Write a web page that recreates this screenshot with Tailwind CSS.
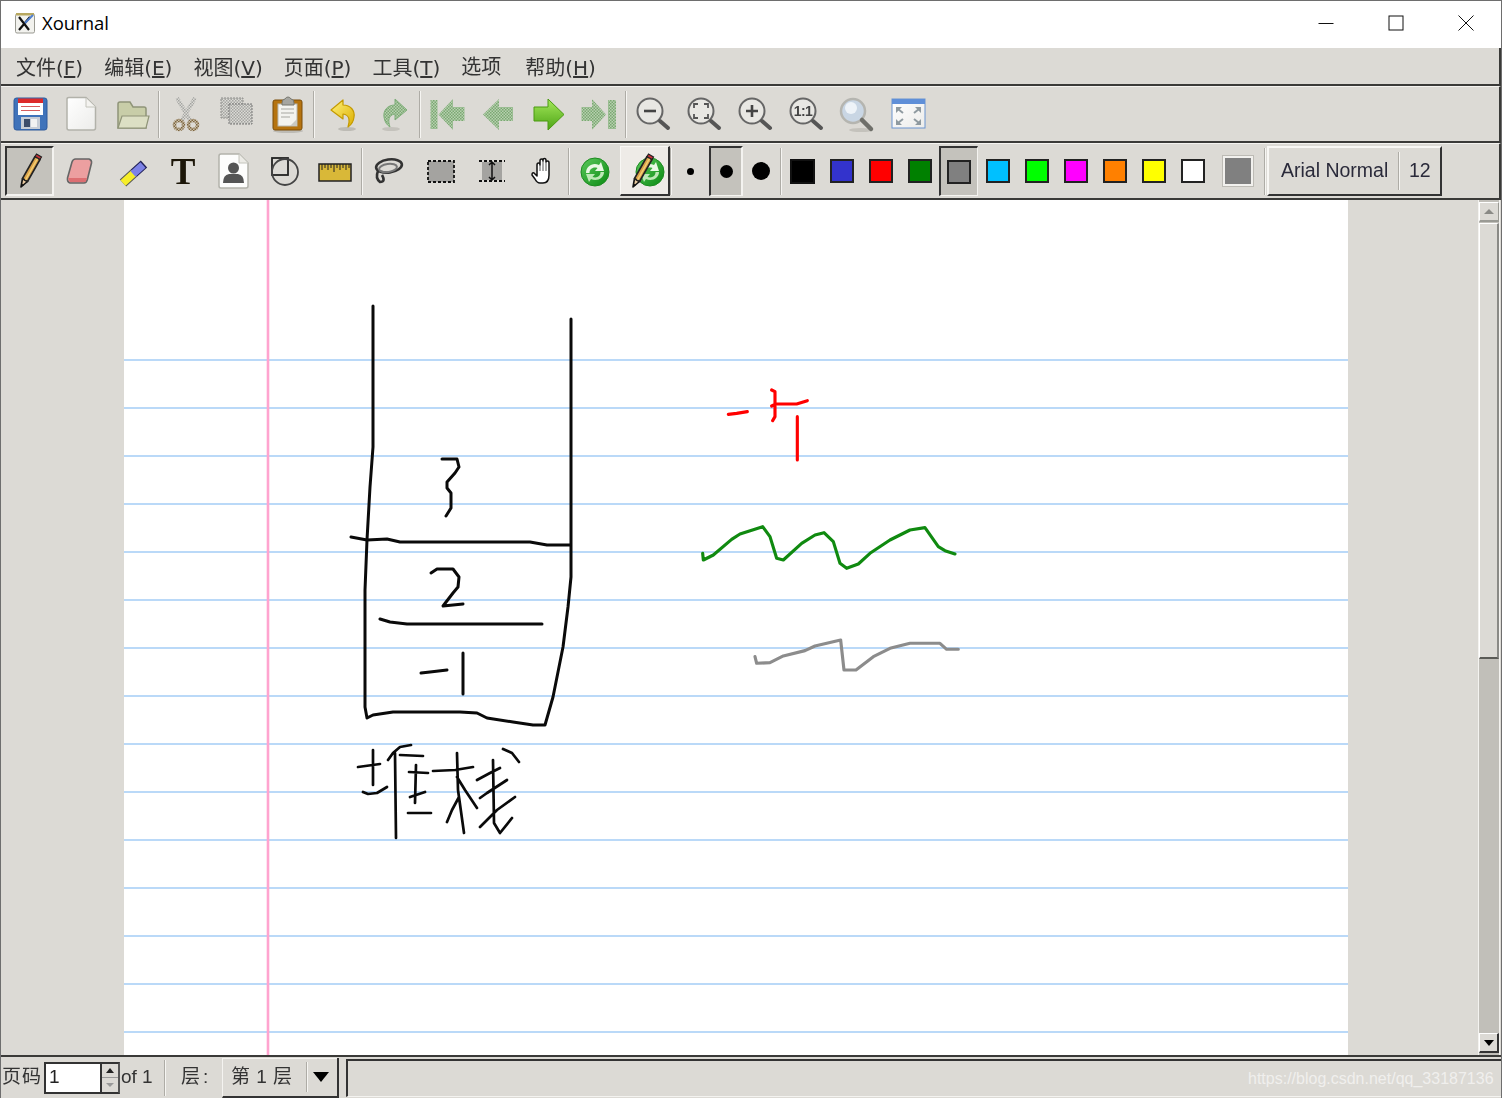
<!doctype html>
<html>
<head>
<meta charset="utf-8">
<title>Xournal</title>
<script src="https://cdn.jsdelivr.net/npm/@tailwindcss/browser@4"></script>
</head>
<body class="bg-white">
<svg class="absolute w-0 h-0">
<defs>
<pattern id="sg" width="3" height="3" patternUnits="userSpaceOnUse"><rect width="3" height="3" fill="#b8d0b0"/><rect width="1.5" height="1.5" fill="#7aa872"/><rect x="1.5" y="1.5" width="1.5" height="1.5" fill="#7aa872"/></pattern>
<pattern id="sk" width="3" height="3" patternUnits="userSpaceOnUse"><rect width="3" height="3" fill="#dcdbd6"/><rect width="1.5" height="1.5" fill="#a5a5a2"/><rect x="1.5" y="1.5" width="1.5" height="1.5" fill="#a5a5a2"/></pattern>
<pattern id="sb" width="3" height="3" patternUnits="userSpaceOnUse"><rect width="3" height="3" fill="#c9c0ab"/><rect width="1.5" height="1.5" fill="#7d6440"/><rect x="1.5" y="1.5" width="1.5" height="1.5" fill="#7d6440"/></pattern>
<linearGradient id="gg" x1="0" y1="0" x2="0" y2="1"><stop offset="0" stop-color="#a4e85a"/><stop offset="1" stop-color="#4da416"/></linearGradient>
<linearGradient id="gy" x1="0" y1="0" x2="1" y2="1"><stop offset="0" stop-color="#fff27a"/><stop offset="1" stop-color="#dcae00"/></linearGradient>
<linearGradient id="gw" x1="0" y1="0" x2="1" y2="1"><stop offset="0" stop-color="#ffffff"/><stop offset="1" stop-color="#ececea"/></linearGradient>
<linearGradient id="gr" x1="0" y1="0" x2="1" y2="1"><stop offset="0" stop-color="#5cc95c"/><stop offset="1" stop-color="#0a8a12"/></linearGradient>
<g id="pencil"><polygon points="11,36 12.5,27.5 17.5,30.5" fill="#e8c9a0" stroke="#111" stroke-width="1.6" stroke-linejoin="round"/><polygon points="12.5,27.5 25,5.5 30,8.5 17.5,30.5" fill="#dba24a" stroke="#222" stroke-width="1.6" stroke-linejoin="round"/><polygon points="15,28.5 27,7 28.2,7.7 16.2,29.2" fill="#f2cf73"/><polygon points="25,5.5 26.5,3 31.5,6 30,8.5" fill="#c8323a" stroke="#222" stroke-width="1.2"/><polygon points="11,36 11.4,32.5 14,34" fill="#111"/></g>
<g id="refresh"><circle cx="20" cy="21" r="14" fill="url(#gr)" stroke="#1c8a20" stroke-width="1"/><path d="M11 22 C11 15 18 11 24 14 L26 11 L29 20 L20 20 L22.5 17 C18 15.5 14.5 18 14.5 22 Z" fill="#e9f8e4"/><path d="M29 21 C29 27 22 31 16 28 L14 31 L11 23 L20 23 L17.5 26 C22 27.5 25.5 25 25.5 21 Z" fill="#bde8b6"/></g>
</defs>
</svg>

<div class="relative w-[1502px] h-[1098px] overflow-hidden flex flex-col border-t border-l border-r border-[#6e6e6e] bg-[#dcdad5] text-[#222] [font-family:'Liberation_Sans','Noto_Sans_CJK_SC',sans-serif]">

  <!-- Title bar -->
  <div class="h-[47px] shrink-0 bg-white flex items-center pb-[3px]">
    <svg class="ml-[13px] w-[22px] h-[22px]" viewBox="0 0 22 22"><rect x="1.5" y="2" width="19" height="19" rx="1.5" fill="#f2f2ee" stroke="#9a9a92"/><rect x="2" y="1" width="18" height="2.5" fill="#b8a860"/><path d="M5 5 L15 18 M16 5 L5 18" stroke="#111" stroke-width="2.2"/><path d="M19 3 L11 11" stroke="#4f7fd0" stroke-width="2"/></svg>
    <span class="ml-[6px] text-[18.5px] text-black [font-family:'Open_Sans',sans-serif]">Xournal</span>
    <div class="ml-auto flex items-center">
      <svg class="w-[16px] h-[16px] mr-[54px]" viewBox="0 0 16 16"><path d="M0.5 8.5 H15.5" stroke="#111" stroke-width="1"/></svg>
      <svg class="w-[16px] h-[16px] mr-[54px]" viewBox="0 0 16 16"><rect x="1" y="1" width="14" height="14" fill="none" stroke="#111" stroke-width="1"/></svg>
      <svg class="w-[16px] h-[16px] mr-[27px]" viewBox="0 0 16 16"><path d="M0.5 0.5 L15.5 15.5 M15.5 0.5 L0.5 15.5" stroke="#111" stroke-width="1"/></svg>
    </div>
  </div>

  <!-- Menu bar -->
  <div class="h-[38px] shrink-0 flex items-center gap-[21px] pl-[15px] pt-[4px] border-b-2 border-r-2 border-b-[#3a3a38] border-r-[#3a3a38] text-[20px] text-[#333] whitespace-nowrap [font-family:'DejaVu_Sans','Noto_Sans_CJK_SC',sans-serif] blur-[0.35px]">
    <span>文件(<u>F</u>)</span>
    <span>编辑(<u>E</u>)</span>
    <span>视图(<u>V</u>)</span>
    <span>页面(<u>P</u>)</span>
    <span>工具(<u>T</u>)</span>
    <span class="mb-[3px]">选项</span>
    <span class="ml-[3px]">帮助(<u>H</u>)</span>
  </div>

  <!-- Toolbar 1 -->
  <div class="h-[57px] shrink-0 flex items-center pl-[4px] border-t border-t-[#f4f3f0] border-b-2 border-r-2 border-b-[#3a3a38] border-r-[#3a3a38] blur-[0.35px]">
    <div class="w-[51px] flex justify-center"><svg class="w-[40px] h-[40px]" viewBox="0 0 40 40"><rect x="3" y="4" width="33" height="32" rx="2.5" fill="#3f73ba" stroke="#2e5a9c"/><rect x="7" y="8" width="25" height="13" fill="#fff"/><rect x="7" y="4.5" width="25" height="4.5" fill="#dd2a2a"/><path d="M10 12.5 H29 M10 16.5 H29" stroke="#c33" stroke-width=".8"/><rect x="10" y="23" width="19" height="12" fill="#c7cdd6"/><rect x="13" y="25" width="6" height="8" fill="#3c4d6a"/><rect x="20" y="25" width="6" height="8" fill="#f2f2f2"/></svg></div>
    <div class="w-[51px] flex justify-center"><svg class="w-[40px] h-[40px]" viewBox="0 0 40 40"><path d="M5 5 Q5 3.5 7 3.5 H24 L33.5 13 V34 Q33.5 36 31.5 36 H7 Q5 36 5 34 Z" fill="url(#gw)" stroke="#b2b2aa" stroke-width="1.5"/><path d="M24 4 V13 H33.5" fill="#f4f3f0" stroke="#c4c4bc"/></svg></div>
    <div class="w-[51px] flex justify-center"><svg class="w-[40px] h-[40px]" viewBox="0 0 40 40"><path d="M5 34 V10 Q5 8 7 8 H17 L20 13 H31 Q33 13 33 15 V34 Z" fill="#c8cda8" stroke="#8f9478" stroke-width="1.5"/><path d="M5 34 L9 22 H36 L33 34 Z" fill="#dcdfc4" stroke="#8f9478" stroke-width="1.2"/></svg></div>
    <div class="w-[2px] h-[47px] shrink-0 border-l border-l-[#aeaca6] bg-[#f6f5f2]"></div>
    <div class="w-[51px] flex justify-center"><svg class="w-[40px] h-[40px]" viewBox="0 0 40 40"><path d="M11 4 L24 26 M29 4 L16 26" stroke="url(#sk)" stroke-width="4"/><circle cx="13" cy="31" r="4.5" fill="none" stroke="url(#sb)" stroke-width="3.5"/><circle cx="27" cy="31" r="4.5" fill="none" stroke="url(#sb)" stroke-width="3.5"/></svg></div>
    <div class="w-[51px] flex justify-center"><svg class="w-[40px] h-[40px]" viewBox="0 0 40 40"><rect x="4" y="4" width="22" height="20" fill="url(#sk)" stroke="#8d8d8a" stroke-dasharray="2 1"/><rect x="12" y="10" width="23" height="20" fill="url(#sk)" stroke="#777" stroke-dasharray="2 1"/></svg></div>
    <div class="w-[51px] flex justify-center"><svg class="w-[40px] h-[40px]" viewBox="0 0 40 40"><ellipse cx="20" cy="37" rx="15" ry="2" fill="#bdbbb5"/><rect x="5" y="6" width="29" height="30" rx="2" fill="#b5730f" stroke="#7a4d08"/><rect x="10" y="10" width="19" height="22" fill="#f3f3ef" stroke="#b8b8b0"/><path d="M13 15 H26 M13 19 H26 M13 23 H22" stroke="#a8a8a2" stroke-width="1.2"/><path d="M29 25 L29 32 L22 32 Z" fill="#c9c9c3"/><path d="M14 9 Q14 5 17 5 Q18 3 20 3 Q22 3 23 5 Q26 5 26 9 V11 H14 Z" fill="#a5a5a0" stroke="#77776f"/></svg></div>
    <div class="w-[2px] h-[47px] shrink-0 mr-[2px] border-l border-l-[#aeaca6] bg-[#f6f5f2]"></div>
    <div class="w-[51px] flex justify-center"><svg class="w-[40px] h-[40px]" viewBox="0 0 40 40"><ellipse cx="24" cy="35" rx="9" ry="2" fill="#bdbbb5"/><path d="M8 16 L20 6 V11 C28 11 32 17 31 23 C30.5 28 28 31 25 33 C27 27 27 21 20 20 V25 Z" fill="url(#gy)" stroke="#c49a00" stroke-width="1.2" stroke-linejoin="round"/></svg></div>
    <div class="w-[51px] flex justify-center"><svg class="w-[40px] h-[40px]" viewBox="0 0 40 40"><ellipse cx="17" cy="35" rx="9" ry="2" fill="#c4c2bc"/><path d="M33 16 L21 5 V11 C13 11 9 17 10 23 C10.5 28 13 31 16 33 C14 27 14 21 21 20 V26 Z" fill="url(#sg)" stroke="#7fae7a" stroke-width="1"/></svg></div>
    <div class="w-[2px] h-[47px] shrink-0 border-l border-l-[#aeaca6] bg-[#f6f5f2]"></div>
    <div class="w-[51px] flex justify-center"><svg class="w-[40px] h-[40px]" viewBox="0 0 40 40"><rect x="3.5" y="6" width="7" height="29" fill="url(#sg)"/><polygon points="11.5,20.5 26,5 26,13 37.5,13 37.5,27 26,27 26,36" fill="url(#sg)"/></svg></div>
    <div class="w-[51px] flex justify-center"><svg class="w-[40px] h-[40px]" viewBox="0 0 40 40"><polygon points="5,20.5 21,5 21,13 35,13 35,27 21,27 21,36" fill="url(#sg)"/></svg></div>
    <div class="w-[51px] flex justify-center"><svg class="w-[40px] h-[40px]" viewBox="0 0 40 40"><polygon points="35,20.5 19,5 19,13 5,13 5,27 19,27 19,36" fill="url(#gg)" stroke="#4a9a10" stroke-linejoin="round"/></svg></div>
    <div class="w-[51px] flex justify-center"><svg class="w-[40px] h-[40px]" viewBox="0 0 40 40"><polygon points="26,20.5 12,5 12,13 1.5,13 1.5,27 12,27 12,36" fill="url(#sg)"/><rect x="28" y="6" width="8" height="29" fill="url(#sg)"/></svg></div>
    <div class="w-[2px] h-[47px] shrink-0 border-l border-l-[#aeaca6] bg-[#f6f5f2]"></div>
    <div class="w-[51px] flex justify-center"><svg class="w-[40px] h-[40px]" viewBox="0 0 40 40"><circle cx="17" cy="17" r="12.5" fill="#e8e7e3" stroke="#666" stroke-width="2"/><path d="M27 27 L35 34" stroke="#555" stroke-width="4" stroke-linecap="round"/><path d="M11 17 H23" stroke="#444" stroke-width="2.6"/></svg></div>
    <div class="w-[51px] flex justify-center"><svg class="w-[40px] h-[40px]" viewBox="0 0 40 40"><circle cx="17" cy="17" r="12.5" fill="#e8e7e3" stroke="#666" stroke-width="2"/><path d="M27 27 L35 34" stroke="#555" stroke-width="4" stroke-linecap="round"/><path d="M10 14 V10 H14 M20 10 H24 V14 M24 20 V24 H20 M14 24 H10 V20" fill="none" stroke="#555" stroke-width="1.8"/></svg></div>
    <div class="w-[51px] flex justify-center"><svg class="w-[40px] h-[40px]" viewBox="0 0 40 40"><circle cx="17" cy="17" r="12.5" fill="#e8e7e3" stroke="#666" stroke-width="2"/><path d="M27 27 L35 34" stroke="#555" stroke-width="4" stroke-linecap="round"/><path d="M11 17 H23 M17 11 V23" stroke="#444" stroke-width="2.6"/></svg></div>
    <div class="w-[51px] flex justify-center"><svg class="w-[40px] h-[40px]" viewBox="0 0 40 40"><circle cx="17" cy="17" r="12.5" fill="#e8e7e3" stroke="#666" stroke-width="2"/><path d="M27 27 L35 34" stroke="#555" stroke-width="4" stroke-linecap="round"/><text x="17" y="22" text-anchor="middle" font-size="14" font-weight="700" letter-spacing="-.5" fill="#444" font-family="Liberation Sans">1:1</text></svg></div>
    <div class="w-[51px] flex justify-center"><svg class="w-[40px] h-[40px]" viewBox="0 0 40 40"><ellipse cx="24" cy="36" rx="12" ry="2" fill="#c4c2bc"/><circle cx="16" cy="17" r="12" fill="#c9d6e4" stroke="#b5b5b0" stroke-width="2.5"/><circle cx="14" cy="14" r="6" fill="#eef3f8"/><path d="M25 26 L34 35" stroke="#6f6f6a" stroke-width="4.5" stroke-linecap="round"/></svg></div>
    <div class="w-[51px] flex justify-center"><svg class="w-[40px] h-[40px]" viewBox="0 0 40 40"><rect x="4" y="5" width="33" height="29" fill="url(#gw)" stroke="#6a94d0" stroke-width="1"/><rect x="4" y="5" width="33" height="5" fill="#5f8fd8"/><path d="M8 13 H14 L8 19 Z M33 13 H27 L33 19 Z M8 31 H14 L8 25 Z M33 31 H27 L33 25 Z" fill="#8f9aa0"/><path d="M10 15 L15 19 M31 15 L26 19 M10 29 L15 25 M31 29 L26 25" stroke="#8f9aa0" stroke-width="2"/></svg></div>
  </div>

  <!-- Toolbar 2 -->
  <div class="h-[57px] shrink-0 flex items-center pl-[4px] border-t border-t-[#f4f3f0] border-b-2 border-r-2 border-b-[#3a3a38] border-r-[#3a3a38] blur-[0.35px]">
    <div class="w-[49px] h-[50px] flex justify-center items-center bg-[#c4c2bc] border-t-2 border-l-2 border-t-[#333] border-l-[#333] border-b-2 border-r-2 border-b-[#f4f3f0] border-r-[#f4f3f0]"><svg class="w-[40px] h-[40px] shrink-0" viewBox="0 0 40 40"><use href="#pencil"/></svg></div>
    <div class="w-[51px] flex justify-center"><svg class="w-[40px] h-[40px]" viewBox="0 0 40 40"><path d="M12 11 Q13 8 15.5 8 H29 Q32 9 31.5 12 L27.5 28 Q26.5 32 24 32 H10 Q7 31 7.5 27 Z" fill="#ec9fa0" stroke="#666" stroke-width="1.6" stroke-linejoin="round"/><path d="M8 27 H27 L25.5 31 H10 Z" fill="#dd6f72"/></svg></div>
    <div class="w-[51px] flex justify-center"><svg class="w-[40px] h-[40px]" viewBox="0 0 40 40"><path d="M12 32 L23 22" stroke="#555" stroke-width="9.5"/><path d="M12 32 L23 22" stroke="#f6ee2a" stroke-width="7.5"/><path d="M23 22 L33 13" stroke="#1f1f55" stroke-width="9.5"/><path d="M22 23 L32 14" stroke="#7d82e6" stroke-width="7.5"/></svg></div>
    <div class="w-[51px] flex justify-center items-center h-[40px] pl-[3px] text-[37px] font-bold leading-none text-[#1c1608] [font-family:'Liberation_Serif',serif]">T</div>
    <div class="w-[51px] flex justify-center"><svg class="w-[40px] h-[40px]" viewBox="0 0 40 40"><path d="M6 5 Q6 3 8 3 H26 L35 12 V35 Q35 37 33 37 H8 Q6 37 6 35 Z" fill="#fdfdfc" stroke="#b2b2aa" stroke-width="1.5"/><path d="M26 3 V12 H35" fill="#ecebe6" stroke="#c4c4bc"/><circle cx="20.5" cy="17" r="5.5" fill="#555"/><path d="M10 32 Q10 24 16 23 H25 Q31 24 31 32 Z" fill="#555"/></svg></div>
    <div class="w-[51px] flex justify-center"><svg class="w-[40px] h-[40px]" viewBox="0 0 40 40"><rect x="8" y="7" width="16" height="17" fill="none" stroke="#222" stroke-width="1.8"/><circle cx="21" cy="21" r="13" fill="none" stroke="#444" stroke-width="1.8"/></svg></div>
    <div class="w-[51px] flex justify-center"><svg class="w-[40px] h-[40px]" viewBox="0 0 40 40"><rect x="4" y="13" width="32" height="17" fill="#d9b838" stroke="#222" stroke-width="1.5"/><path d="M7 13 V19 M10 13 V17 M13 13 V19 M16 13 V17 M19 13 V21 M22 13 V17 M25 13 V19 M28 13 V17 M31 13 V19 M34 13 V17" stroke="#222" stroke-width="1"/></svg></div>
    <div class="w-[2px] h-[47px] shrink-0 ml-[1px] mr-[1px] border-l border-l-[#aeaca6] bg-[#f6f5f2]"></div>
    <div class="w-[51px] flex justify-center"><svg class="w-[40px] h-[40px]" viewBox="0 0 40 40"><ellipse cx="19" cy="15" rx="13" ry="6.5" transform="rotate(-8 19 15)" fill="none" stroke="#333" stroke-width="2.6"/><ellipse cx="18" cy="17" rx="9" ry="4" transform="rotate(-8 18 17)" fill="none" stroke="#777" stroke-width="2"/><path d="M8 20 Q5 27 10 31 Q16 31 12 24" fill="none" stroke="#333" stroke-width="2.6"/></svg></div>
    <div class="w-[51px] flex justify-center"><svg class="w-[40px] h-[40px]" viewBox="0 0 40 40"><rect x="7" y="10" width="26" height="21" fill="#a4a3a0" stroke="#111" stroke-width="1.8" stroke-dasharray="3 2"/></svg></div>
    <div class="w-[51px] flex justify-center"><svg class="w-[40px] h-[40px]" viewBox="0 0 40 40"><path d="M7 10 H33 M7 30 H33" stroke="#111" stroke-width="1.8" stroke-dasharray="3 2"/><rect x="10" y="11" width="20" height="18" fill="#a4a3a0"/><path d="M20 11 V29 M17 14 L20 11 L23 14 M17 26 L20 29 L23 26" fill="none" stroke="#111" stroke-width="1.5"/></svg></div>
    <div class="w-[51px] flex justify-center"><svg class="w-[40px] h-[40px]" viewBox="0 0 40 40"><path d="M11 22 L14 25 V14 Q14 12 15.5 12 Q17 12 17 14 V10 Q17 8 18.5 8 Q20 8 20 10 V9 Q20 7.5 21.5 7.5 Q23 7.5 23 9.5 V11 Q23 10 24.5 10 Q26 10 26 12 V24 Q26 32 20 32 H17 Q14 32 12 28 L9 24 Q9 21 11 22 Z" fill="#fff" stroke="#111" stroke-width="1.5" stroke-linejoin="round"/><path d="M17 14 V20 M20 10 V20 M23 11 V20" stroke="#555"/></svg></div>
    <div class="w-[2px] h-[47px] shrink-0 border-l border-l-[#aeaca6] bg-[#f6f5f2]"></div>
    <div class="w-[50px] flex justify-center"><svg class="w-[40px] h-[40px]" viewBox="0 0 40 40"><use href="#refresh"/></svg></div>
    <div class="w-[50px] h-[50px] flex justify-center items-center bg-[#eeebe7] border-t border-l border-t-[#f8f7f4] border-l-[#f8f7f4] border-b-2 border-r-2 border-b-[#333] border-r-[#333]"><svg class="w-[40px] h-[40px] shrink-0" viewBox="0 0 40 40"><use href="#refresh" x="5"/><use href="#pencil" x="-3"/></svg></div>
    <div class="w-[2px] h-[47px] shrink-0 border-l border-l-[#aeaca6] bg-[#f6f5f2]"></div>
    <div class="w-[37px] flex justify-center"><span class="block w-[7px] h-[7px] rounded-full bg-black"></span></div>
    <div class="w-[34px] h-[50px] flex justify-center items-center bg-[#c4c2bc] border-t-2 border-l-2 border-t-[#333] border-l-[#333] border-b border-r-2 border-b-[#f4f3f0] border-r-[#f4f3f0]"><span class="block w-[13px] h-[13px] rounded-full bg-black"></span></div>
    <div class="w-[36px] flex justify-center"><span class="block w-[18px] h-[18px] rounded-full bg-black"></span></div>
    <div class="w-[2px] h-[47px] shrink-0 ml-[1px] mr-[1px] border-l border-l-[#aeaca6] bg-[#f6f5f2]"></div>
    <div class="w-[39px] flex justify-center"><span class="block w-[25px] h-[25px] bg-black border-2 border-[#111]"></span></div>
    <div class="w-[39px] flex justify-center"><span class="block w-[24px] h-[24px] bg-[#3333cc] border-2 border-[#222]"></span></div>
    <div class="w-[39px] flex justify-center"><span class="block w-[24px] h-[24px] bg-[#ff0000] border-2 border-[#222]"></span></div>
    <div class="w-[39px] flex justify-center"><span class="block w-[24px] h-[24px] bg-[#008000] border-2 border-[#222]"></span></div>
    <div class="w-[39px] h-[50px] flex justify-center items-center bg-[#c4c2bc] border-t-2 border-l-2 border-t-[#333] border-l-[#333] border-b border-r border-b-[#f4f3f0] border-r-[#f4f3f0]"><span class="block w-[24px] h-[24px] bg-[#808080] border-2 border-[#222]"></span></div>
    <div class="w-[39px] flex justify-center"><span class="block w-[24px] h-[24px] bg-[#00c0ff] border-2 border-[#222]"></span></div>
    <div class="w-[39px] flex justify-center"><span class="block w-[24px] h-[24px] bg-[#00ff00] border-2 border-[#222]"></span></div>
    <div class="w-[39px] flex justify-center"><span class="block w-[24px] h-[24px] bg-[#ff00ff] border-2 border-[#222]"></span></div>
    <div class="w-[39px] flex justify-center"><span class="block w-[24px] h-[24px] bg-[#ff8000] border-2 border-[#222]"></span></div>
    <div class="w-[39px] flex justify-center"><span class="block w-[24px] h-[24px] bg-[#ffff00] border-2 border-[#222]"></span></div>
    <div class="w-[39px] flex justify-center"><span class="block w-[24px] h-[24px] bg-white border-2 border-[#222]"></span></div>
    <div class="w-[51px] flex justify-center"><span class="block w-[30px] h-[30px] bg-[#808080] border-2 border-[#f2f1ee] outline outline-[#bdbbb5]"></span></div>
    <div class="w-[2px] h-[47px] shrink-0 ml-[1px] mr-[1px] border-l border-l-[#aeaca6] bg-[#f6f5f2]"></div>
    <div class="w-[175px] h-[50px] flex items-center border-t-2 border-l-2 border-t-[#f8f7f4] border-l-[#f8f7f4] border-b-2 border-r-2 border-b-[#333] border-r-[#333] text-[19.5px] text-[#2a2a3a]">
      <span class="ml-[12px] w-[117px] whitespace-nowrap">Arial Normal</span>
      <span class="w-[2px] h-[38px] border-l border-l-[#aeaca6] bg-[#f6f5f2]"></span>
      <span class="ml-[9px]">12</span>
    </div>
  </div>

  <!-- Canvas and scrollbar -->
  <div class="h-[855px] shrink-0 flex">
    <div class="w-[123px] shrink-0"></div>
    <div class="w-[1224px] shrink-0 bg-white">
      <svg class="block w-[1224px] h-[855px] blur-[0.3px]" viewBox="124 200 1224 855" fill="none" stroke-linecap="round" stroke-linejoin="round">
        <path d="M124 360H1348M124 408H1348M124 456H1348M124 504H1348M124 552H1348M124 600H1348M124 648H1348M124 696H1348M124 744H1348M124 792H1348M124 840H1348M124 888H1348M124 936H1348M124 984H1348M124 1032H1348" stroke="#a4cdf6" stroke-width="1.6" stroke-linecap="butt"/>
        <path d="M268 200V1055" stroke="#ffa4cf" stroke-width="2.6" stroke-linecap="butt"/>
        <g stroke="#0a0a0a" stroke-width="3">
          <path d="M373 306V447L370 487L367 540L365 590V707L367 718L373 715L393 712H460L477 713L487 718L513 722L533 725H545L553 697L563 647L568 607L571 577V319"/>
          <path d="M351 537L367 540L387 539L400 542H530L547 545H570"/>
          <path d="M442 459H457L459 467L455 473L447 482L447 488L451 493V508L446 516"/>
          <path d="M431 573L437 569H453L459 577L458 587L453 593L443 606L463 604"/>
          <path d="M380 619L390 622L407 624H542"/>
          <path d="M421 673L430 672L447 670M463 653V694"/>
        </g>
        <g stroke="#0a0a0a" stroke-width="2.7">
          <path d="M373 750V785M358 767L380 764M363 792L368 794L377 793L387 787"/>
          <path d="M411 745L400 747L393 753L388 760M395 753L396 838M400 755L423 756M416 765L415 803M409 772L428 773M410 797L425 792M408 813H431"/>
          <path d="M433 771L455 770L473 767M457 753L458 790L464 833M457 777L465 790L477 808M459 797L452 810L447 822"/>
          <path d="M503 749L512 753L519 762M477 780L490 773L500 768M493 760L494 823L500 833L512 818M480 798L487 793L507 780M480 827L497 810L515 797"/>
        </g>
        <g transform="translate(690 380) scale(.3333)" stroke-width="9.4">
          <path stroke="#ff0000" d="M115 103L140 100L172 95M245 30L255 35V110L248 122M245 78L258 72H320L352 62M322 110V240"/>
          <path stroke="#108a10" d="M38 520L40 540L70 525L125 478L150 462L218 440L240 470L260 535L280 540L335 490L375 465L402 458L430 485L450 550L470 565L505 552L540 520L600 480L660 450L705 443L745 500L765 512L795 522"/>
          <path stroke="#8c8c8c" d="M195 830L200 850L240 848L280 828L345 812L375 798L452 780L462 870H498L550 830L600 805L660 790H750L770 808H805"/>
        </g>
      </svg>
    </div>
    <div class="w-[130px] shrink-0"></div>
    <div class="w-[22px] shrink-0 flex flex-col bg-[#c1bfb9] border-l border-r border-[#f4f3f0] pt-[2px] pb-[2px]">
      <div class="h-[20px] shrink-0 flex items-center justify-center bg-[#dcdad5] border-t border-l border-t-white border-l-white border-b-2 border-r border-b-[#9a9a94] border-r-[#9a9a94]"><span class="block w-0 h-0 border-l-[5px] border-r-[5px] border-b-[5px] border-l-transparent border-r-transparent border-b-[#8a8a86]"></span></div>
      <div class="h-[436px] shrink-0 bg-[#dcdad5] mt-[1px] border-t border-l border-t-white border-l-white border-b-2 border-r-2 border-b-[#5a5a56] border-r-[#8a8a86]"></div>
      <div class="flex-1"></div>
      <div class="h-[20px] shrink-0 flex items-center justify-center bg-[#dcdad5] border-t border-l border-t-white border-l-white border-b-2 border-r-2 border-b-[#333] border-r-[#333]"><span class="block w-0 h-0 border-l-[5px] border-r-[5px] border-t-[6px] border-l-transparent border-r-transparent border-t-black"></span></div>
    </div>
  </div>

  <!-- Status bar -->
  <div class="flex-1 flex items-center border-t-2 border-t-[#3a3a38] text-[19px] text-[#333] blur-[0.3px]">
    <span class="ml-[1px] w-[42px] tracking-[1px] whitespace-nowrap">页码</span>
    <div class="w-[76px] h-[32px] flex items-center border-2 border-t-[#333] border-l-[#333] border-b-[#333] border-r-[#555] bg-white">
      <span class="ml-[3px] flex-1 text-[#222]">1</span>
      <div class="w-[18px] h-full flex flex-col border-l-2 border-l-[#333] bg-[#dcdad5]">
        <div class="flex-1 flex items-center justify-center border-b border-b-[#999]"><span class="block w-0 h-0 border-l-[4px] border-r-[4px] border-b-[5px] border-l-transparent border-r-transparent border-b-[#222]"></span></div>
        <div class="flex-1 flex items-center justify-center"><span class="block w-0 h-0 border-l-[4px] border-r-[4px] border-t-[4px] border-l-transparent border-r-transparent border-t-[#999]"></span></div>
      </div>
    </div>
    <span class="ml-[1px] w-[43px] whitespace-nowrap">of 1</span>
    <span class="w-[2px] h-[36px] border-l border-l-[#aeaca6] bg-[#f6f5f2]"></span>
    <span class="ml-[15px] w-[41px] tracking-[3px] whitespace-nowrap">层:</span>
    <div class="w-[115px] h-[40px] flex items-center border-t border-l border-t-[#f4f3f0] border-l-[#f4f3f0] border-b-2 border-b-[#333]">
      <span class="ml-[8px] w-[75px] whitespace-nowrap tracking-[0.5px]">第 1 层</span>
      <span class="w-[2px] h-[30px] border-l border-l-[#aeaca6] bg-[#f6f5f2]"></span>
      <span class="ml-[5px] block w-0 h-0 border-l-[8px] border-r-[8px] border-t-[10px] border-l-transparent border-r-transparent border-t-black"></span>
    </div>
    <span class="w-[2px] h-[40px] bg-[#333]"></span>
    <div class="ml-[7px] flex-1 h-[38px] border-t-2 border-l-2 border-t-[#333] border-l-[#333] border-b border-b-[#f4f3f0]"></div>
  </div>
  <span class="absolute left-[1247px] top-[1066px] text-[16px] text-white/60 whitespace-nowrap">https://blog.csdn.net/qq_33187136</span>
</div>
</body>
</html>
